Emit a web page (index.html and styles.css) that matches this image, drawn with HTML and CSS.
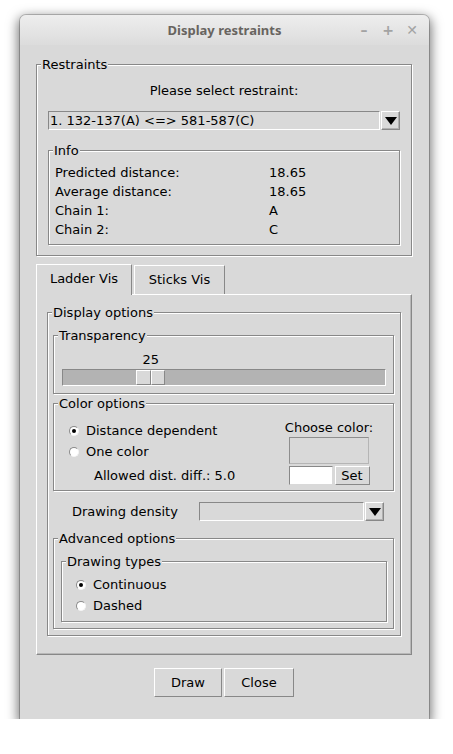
FILE: index.html
```html
<!DOCTYPE html>
<html>
<head>
<meta charset="utf-8">
<link rel="stylesheet" href="styles.css">
</head>
<body>
<div class="window">
  <div class="titlebar">
    <span class="title">Display restraints</span>
    <div class="wm-controls"><span>–</span><span>+</span><span>✕</span></div>
  </div>
  <div class="content">
    <div class="lf restraints">
      <div class="lf-label">Restraints</div>
      <div class="prompt">Please select restraint:</div>
      <div class="combo main-combo">
        <div class="combo-field">1. 132-137(A) &lt;=&gt; 581-587(C)</div>
        <div class="combo-arrow"><span class="tri"></span></div>
      </div>
      <div class="lf info">
        <div class="lf-label">Info</div>
        <div class="info-grid">
          <span>Predicted distance:</span><span>18.65</span>
          <span>Average distance:</span><span>18.65</span>
          <span>Chain 1:</span><span>A</span>
          <span>Chain 2:</span><span>C</span>
        </div>
      </div>
    </div>

    <div class="tabs">
      <div class="tab active tab-ladder">Ladder Vis</div>
      <div class="tab tab-sticks">Sticks Vis</div>
    </div>
    <div class="tab-panel">
      <div class="lf display-options">
        <div class="lf-label">Display options</div>

        <div class="lf sub transparency">
          <div class="lf-label">Transparency</div>
          <div class="slider" style="--v:0.25">
            <div class="slider-value"><span>25</span></div>
            <div class="trough">
              <div class="handle"><span></span><span></span></div>
            </div>
          </div>
        </div>

        <div class="lf sub color-options">
          <div class="lf-label">Color options</div>
          <div class="color-body">
            <div class="color-left">
              <div class="radio-row"><span class="radio on"></span><span>Distance dependent</span></div>
              <div class="radio-row"><span class="radio"></span><span>One color</span></div>
              <div class="allowed">Allowed dist. diff.: 5.0</div>
            </div>
            <div class="color-right">
              <div class="choose">Choose color:</div>
              <div class="swatch"></div>
              <div class="set-row">
                <div class="entry"></div>
                <div class="btn set-btn">Set</div>
              </div>
            </div>
          </div>
        </div>

        <div class="density-row">
          <span class="density-label">Drawing density</span>
          <div class="combo density-combo">
            <div class="combo-field"></div>
            <div class="combo-arrow"><span class="tri"></span></div>
          </div>
        </div>

        <div class="lf sub advanced">
          <div class="lf-label">Advanced options</div>
          <div class="lf drawing-types">
            <div class="lf-label">Drawing types</div>
            <div class="types-list">
              <div class="radio-row"><span class="radio on"></span><span>Continuous</span></div>
              <div class="radio-row"><span class="radio"></span><span>Dashed</span></div>
            </div>
          </div>
        </div>
      </div>
    </div>

    <div class="buttons">
      <div class="btn draw-btn">Draw</div>
      <div class="btn close-btn">Close</div>
    </div>
  </div>
</div>
</body>
</html>
```

FILE: styles.css
```css
* { box-sizing: border-box; }
html, body { margin: 0; padding: 0; background: #ffffff; }
body {
  font-family: "DejaVu Sans", sans-serif;
  font-size: 13px;
  color: #000;
  line-height: 15px;
}

.window {
  margin: 15px 0 0 20px;
  width: 409px;
  height: 704px;
  background: #d9d9d9;
  border-radius: 6px 6px 0 0;
  box-shadow: 0 0 0 1px rgba(0,0,0,0.2), 0 4px 12px 2px rgba(0,0,0,0.55);
}

.titlebar {
  height: 30px;
  display: grid;
  grid-template-columns: 1fr auto 1fr;
  align-items: center;
  background: linear-gradient(#eeeeee, #dcdcdc);
  border-radius: 6px 6px 0 0;
}
.title {
  grid-column: 2;
  font-family: "Noto Sans", sans-serif;
  font-weight: 700;
  font-size: 13px;
  color: #68645f;
}
.wm-controls {
  grid-column: 3;
  justify-self: end;
  display: flex;
  padding-right: 5px;
}
.wm-controls span {
  width: 24px;
  text-align: center;
  color: #a3a3a3;
  font-weight: 700;
  font-size: 14px;
}

.content {
  padding: 0 17px 0 16px;
}

/* groove label frame */
.lf {
  border: 1px solid #888888;
  box-shadow: inset 1px 1px 0 #ffffff, 1px 1px 0 #ffffff;
}
.lf-label {
  display: table;
  margin: -8px 0 0 4px;
  padding: 0 1px;
  line-height: 15px;
  background: #d9d9d9;
}

.restraints {
  margin-top: 19px;
  height: 192px;
}
.prompt {
  margin-top: 11px;
  text-align: center;
}

.combo {
  display: flex;
  height: 19px;
}
.combo-field {
  flex: 1;
  border-style: solid;
  border-width: 1px;
  border-color: #888888 #ffffff #ffffff #888888;
  padding-left: 1px;
  line-height: 17px;
  white-space: nowrap;
  overflow: hidden;
}
.combo-arrow {
  width: 19px;
  margin-left: 1px;
  border-style: solid;
  border-width: 1px;
  border-color: #ffffff #888888 #888888 #ffffff;
  box-shadow: inset -1px -1px 0 #b0b0b0;
  display: flex;
  align-items: center;
  justify-content: center;
}
.tri {
  width: 0;
  height: 0;
  border-left: 6px solid transparent;
  border-right: 6px solid transparent;
  border-top: 8px solid #000;
  margin-top: 1px;
}
.main-combo {
  margin: 13px 11px 0 11px;
}

.info {
  margin: 20px 11px 0 11px;
  height: 95px;
}
.info-grid {
  margin-top: 5px;
  padding-left: 6px;
  display: grid;
  grid-template-columns: 214px auto;
  line-height: 19px;
}

/* tabs */
.tabs {
  display: flex;
  align-items: flex-end;
  margin-top: 8px;
  height: 30px;
}
.tab {
  height: 29px;
  line-height: 27px;
  text-align: center;
  border-top: 1px solid #ffffff;
  border-left: 1px solid #ffffff;
  border-right: 1px solid #888888;
  background: #d9d9d9;
}
.tab.active {
  height: 31px;
  line-height: 28px;
  margin-bottom: -1px;
  position: relative;
  z-index: 1;
}
.tab-ladder { width: 96px; }
.tab-sticks { width: 91px; margin-left: 2px; }

.tab-panel {
  position: relative;
  height: 361px;
  border-style: solid;
  border-width: 1px;
  border-color: #ffffff #888888 #888888 #ffffff;
  box-shadow: inset -1px -1px 0 #b8b8b8;
}

.display-options {
  margin: 17px 0 0 10px;
  width: 354px;
  height: 324px;
}
.sub {
  margin-left: 5px;
  width: 341px;
}

.transparency {
  margin-top: 15px;
  height: 59px;
}
.slider-value {
  margin: 9px 0 0 9px;
  width: 322px;
}
.slider-value span {
  display: block;
  width: 29px;
  text-align: center;
  margin-left: calc((100% - 29px) * var(--v));
}
.trough {
  margin: 2px 0 0 8px;
  width: 324px;
  height: 17px;
  border-style: solid;
  border-width: 1px;
  border-color: #888888 #ffffff #ffffff #888888;
  background: #b3b3b3;
}
.handle {
  display: flex;
  width: 29px;
  height: 15px;
  margin-left: calc((100% - 29px) * var(--v));
}
.handle span {
  flex: 1;
  background: #d9d9d9;
  border-style: solid;
  border-width: 1px;
  border-color: #ffffff #888888 #888888 #ffffff;
}

.color-options {
  margin-top: 9px;
  height: 88px;
}
.color-body {
  display: grid;
  grid-template-columns: 1fr 90px;
  padding-right: 19px;
  margin-top: 9px;
}
.color-left {
  padding-left: 15px;
}
.radio-row {
  display: flex;
  align-items: center;
  height: 21px;
}
.radio {
  position: relative;
  width: 10px;
  height: 10px;
  margin-right: 7px;
  border-radius: 50%;
  background: #ffffff;
  border: 1px solid;
  border-color: #8a8a8a #f4f4f4 #f4f4f4 #8a8a8a;
  flex: none;
}
.radio.on::after {
  content: "";
  position: absolute;
  left: 2px;
  top: 2px;
  width: 4px;
  height: 4px;
  border-radius: 50%;
  background: #000;
}
.allowed {
  margin: 6px 0 0 25px;
}
.color-right {
  display: flex;
  flex-direction: column;
  align-items: center;
}
.choose {
  white-space: nowrap;
}
.swatch {
  margin-top: 2px;
  width: 80px;
  height: 27px;
  border-style: solid;
  border-width: 1px;
  border-color: #8e8e8e #b5b5b5 #b5b5b5 #8e8e8e;
  background: #d9d9d9;
}
.set-row {
  display: flex;
  gap: 2px;
  margin-top: 2px;
}
.entry {
  width: 44px;
  height: 19px;
  background: #ffffff;
  border-style: solid;
  border-width: 1px;
  border-color: #888888 #d9d9d9 #d9d9d9 #888888;
}
.btn {
  background: #d9d9d9;
  border-style: solid;
  border-width: 1px;
  border-color: #ffffff #888888 #888888 #ffffff;
  text-align: center;
}
.set-btn {
  width: 35px;
  height: 19px;
  line-height: 17px;
}

.density-row {
  display: flex;
  align-items: center;
  margin: 11px 0 0 24px;
  height: 19px;
}
.density-label {
  width: 127px;
  line-height: 19px;
}
.density-combo {
  width: 185px;
}

.advanced {
  margin-top: 17px;
  height: 91px;
}
.drawing-types {
  margin: 15px 0 0 7px;
  width: 326px;
  height: 61px;
}
.types-list {
  margin-top: 5px;
  padding-left: 14px;
}

.buttons {
  display: flex;
  justify-content: center;
  gap: 2px;
  margin-top: 13px;
}
.buttons .btn {
  height: 29px;
  line-height: 27px;
}
.draw-btn { width: 68px; }
.close-btn { width: 70px; }
```
